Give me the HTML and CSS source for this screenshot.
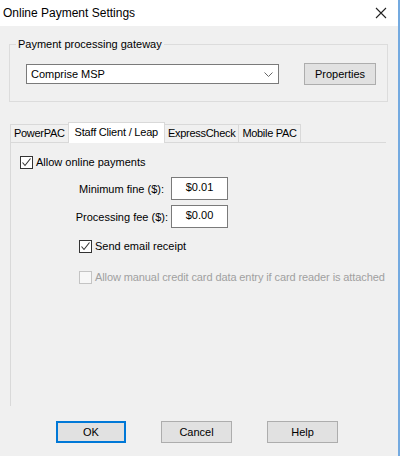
FILE: index.html
```html
<!DOCTYPE html>
<html lang="en">

<head>
    <meta charset="UTF-8">
    <meta name="viewport" content="width=device-width, initial-scale=1.0">
    <title>Online Payment Settings</title>
    <link rel="stylesheet" href="styles.css">
</head>

<body>
    <div class="window">
        <div class="titlebar">
            <span class="title">Online Payment Settings</span>
            <svg class="close" width="12" height="12" viewBox="0 0 12 12">
                <path d="M1 1 L11 11 M11 1 L1 11" stroke="#222" stroke-width="1.1" fill="none" />
            </svg>
        </div>

        <fieldset class="group">
            <legend>Payment processing gateway</legend>
            <div class="gateway-row">
                <div class="combo">
                    <span>Comprise MSP</span>
                    <svg width="9" height="5" viewBox="0 0 9 5">
                        <polyline points="0.5,0.5 4.5,4.5 8.5,0.5" stroke="#666" stroke-width="1" fill="none" />
                    </svg>
                </div>
                <button class="button">Properties</button>
            </div>
        </fieldset>

        <div class="tabs">
            <div class="tab first">PowerPAC</div>
            <div class="tab selected">Staff Client / Leap</div>
            <div class="tab">ExpressCheck</div>
            <div class="tab">Mobile PAC</div>
        </div>

        <div class="panel">
            <label class="check">
                <span class="box checked">
                    <svg width="11" height="11" viewBox="0 0 11 11">
                        <polyline points="1.5,5.5 4,8.5 9.5,1.5" stroke="#333" stroke-width="1.1" fill="none" />
                    </svg>
                </span>
                Allow online payments
            </label>

            <div class="fields">
                <span class="field-label">Minimum fine ($):</span>
                <div class="input">$0.01</div>
                <span class="field-label wide">Processing fee ($):</span>
                <div class="input">$0.00</div>
            </div>

            <div class="sub-options">
                <label class="check">
                    <span class="box checked">
                        <svg width="11" height="11" viewBox="0 0 11 11">
                            <polyline points="1.5,5.5 4,8.5 9.5,1.5" stroke="#333" stroke-width="1.1" fill="none" />
                        </svg>
                    </span>
                    Send email receipt
                </label>
                <label class="check disabled">
                    <span class="box"></span>
                    Allow manual credit card data entry if card reader is attached
                </label>
            </div>
        </div>

        <div class="button-container">
            <button class="button default">OK</button>
            <button class="button">Cancel</button>
            <button class="button">Help</button>
        </div>
    </div>
</body>

</html>
```

FILE: styles.css
```css
body {
    margin: 0;
    background-color: #f0f0f0;
    font-family: "Liberation Sans", Arial, sans-serif;
    font-size: 11px;
    color: #000;
    white-space: nowrap;
}

.window {
    width: 398px;
    height: 456px;
    border-right: 2px solid #74aae0;
    overflow: hidden;
}

.titlebar {
    height: 26px;
    background-color: white;
    display: flex;
    align-items: center;
    justify-content: space-between;
    padding-left: 3px;
    padding-right: 11px;
}

.title {
    font-size: 12px;
}

.close {
    display: block;
}

/* group box */
.group {
    margin: 11px 10px 0 9px;
    padding: 0 0 16px 16px;
    border: 1px solid #dcdcdc;
    min-width: 0;
}

.group legend {
    margin-left: -10px;
    padding: 0 2px;
    line-height: 14px;
}

.gateway-row {
    display: flex;
    align-items: center;
    margin-top: 12px;
}

.combo {
    width: 253px;
    height: 20px;
    box-sizing: border-box;
    background-color: white;
    border: 1px solid #7a7a7a;
    display: flex;
    align-items: center;
    justify-content: space-between;
    padding: 0 5px 0 4px;
}

.button {
    height: 22px;
    box-sizing: border-box;
    background-color: #e1e1e1;
    border: 1px solid #adadad;
    font-family: inherit;
    font-size: 11px;
    color: #000;
    padding: 0;
}

.gateway-row .button {
    width: 72px;
    margin-left: 25px;
}

/* tabs */
.tabs {
    display: flex;
    align-items: flex-end;
    margin: 20px 0 0 10px;
    height: 20px;
}

.tab {
    height: 18px;
    box-sizing: border-box;
    border: 1px solid #d9d9d9;
    border-bottom: none;
    margin-left: -1px;
    padding: 2px 3px 0 3px;
    background-color: #f0f0f0;
    letter-spacing: -0.3px;
}

.tab.first {
    margin-left: 0;
}

.tab.selected {
    height: 21px;
    margin-bottom: -1px;
    background-color: white;
    padding: 3px 6px 0 6px;
    letter-spacing: -0.2px;
    position: relative;
}

.panel {
    margin-left: 10px;
    width: 376px;
    height: 264px;
    box-sizing: border-box;
    border-top: 1px solid #d9d9d9;
    border-left: 1px solid #d9d9d9;
    padding: 12px 0 0 9px;
}

.check {
    display: flex;
    align-items: center;
    gap: 3px;
    height: 14px;
}

.box {
    width: 13px;
    height: 13px;
    box-sizing: border-box;
    border: 1px solid #333;
    background-color: white;
    display: flex;
    align-items: center;
    justify-content: center;
}

.box svg {
    display: block;
}

.check.disabled {
    color: #a0a0a0;
    letter-spacing: -0.1px;
}

.check.disabled .box {
    border-color: #c4c4c4;
    background-color: #f7f7f7;
}

.fields {
    display: grid;
    grid-template-columns: 100px 57px;
    row-gap: 5px;
    align-items: center;
    margin: 8px 0 0 51px;
}

.field-label {
    text-align: right;
    padding-right: 7px;
}

.field-label.wide {
    padding-right: 3px;
}

.input {
    height: 23px;
    box-sizing: border-box;
    border: 1px solid #7a7a7a;
    background-color: white;
    text-align: center;
    line-height: 18px;
}

.sub-options {
    margin: 11px 0 0 59px;
    display: flex;
    flex-direction: column;
    gap: 17px;
}

.button-container {
    display: flex;
    gap: 35px;
    margin: 15px 0 0 56px;
}

.button-container .button {
    width: 71px;
}

.button.default {
    width: 70px;
    border: 2px solid #0078d7;
}
```
